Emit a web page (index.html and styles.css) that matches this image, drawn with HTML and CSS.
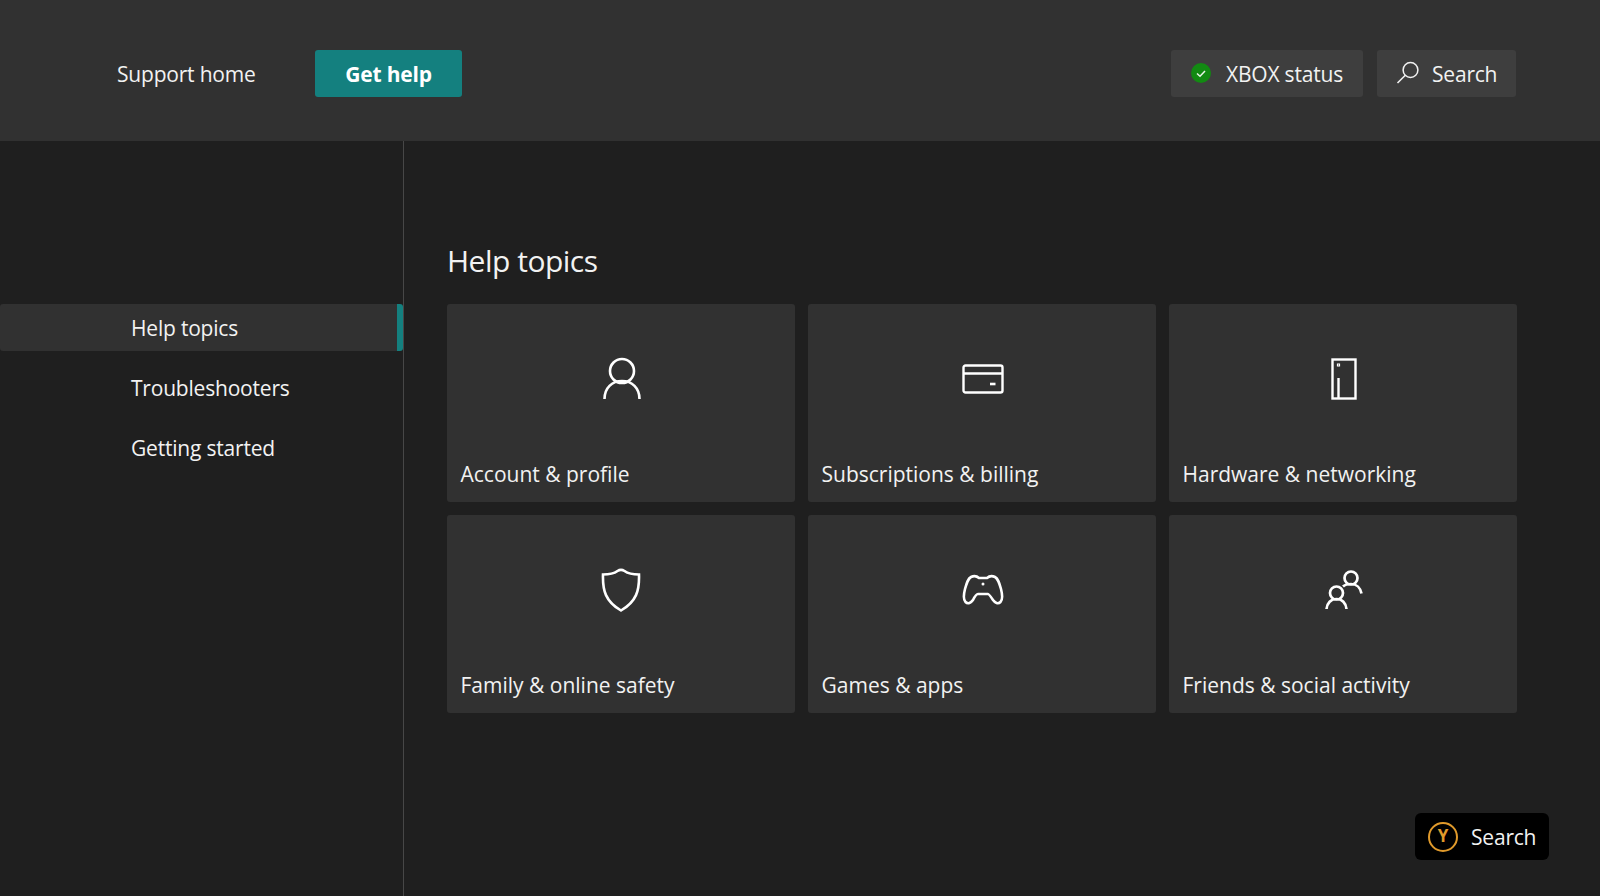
FILE: index.html
```html
<!DOCTYPE html>
<html>
    <head>
        <title>Xbox Support</title>
        <link rel="stylesheet" href="styles.css">
    </head>
    <body>
        <header class="top">
            <a class="home">Support home</a>
            <a class="gethelp">Get help</a>
            <div class="top-right">
                <a class="topbtn status">
                    <svg class="dot" width="22" height="22" viewBox="0 0 22 22"><circle cx="11" cy="11" r="10" fill="#128a12"/><path d="M7 11.500l3 2.800 5-5.400" fill="none" stroke="#e8f5e8" stroke-width="1.500"/></svg>
                    <span class="lbl">XBOX status</span>
                </a>
                <a class="topbtn find">
                    <svg width="24" height="24" viewBox="0 0 24 24"><circle cx="14.500" cy="9" r="7.400" fill="none" stroke="#f2f2f2" stroke-width="1.500"/><path d="M9.300 14.300L1.500 22" fill="none" stroke="#f2f2f2" stroke-width="1.600"/></svg>
                    <span class="lbl">Search</span>
                </a>
            </div>
        </header>
        <div class="wrap">
            <nav class="side">
                <a class="navitem on">Help topics</a>
                <a class="navitem">Troubleshooters</a>
                <a class="navitem">Getting started</a>
            </nav>
            <main class="main">
                <h1>Help topics</h1>
                <div class="cards">
                    <div class="card">
                        <div class="icon"><svg width="40" height="44" viewBox="0 0 40 44"><g fill="none" stroke="#fff" stroke-width="2.600"><circle cx="20" cy="14" r="12"/><path d="M2.500 42C2.500 31 10 24 20 24s17.500 7 17.500 18"/></g></svg></div>
                        <span>Account &amp; profile</span>
                    </div>
                    <div class="card">
                        <div class="icon"><svg width="42" height="30" viewBox="0 0 42 30"><g fill="none" stroke="#fff" stroke-width="2.400"><rect x="1.500" y="1.500" width="39" height="27" rx="2"/><path d="M1.500 9.500h39"/><path d="M28 20h5.500" stroke-width="2.600"/></g></svg></div>
                        <span>Subscriptions &amp; billing</span>
                    </div>
                    <div class="card">
                        <div class="icon"><svg width="26" height="42" viewBox="0 0 26 42"><g fill="none" stroke="#fff" stroke-width="2.400"><rect x="1.500" y="1.500" width="23" height="39"/><path d="M7.500 20v20"/><path d="M6.500 6h2v2h-2z" stroke-width="1.200"/></g></svg></div>
                        <span>Hardware &amp; networking</span>
                    </div>
                    <div class="card">
                        <div class="icon shield"><svg width="40" height="44" viewBox="0 0 40 44"><path d="M2 6.500C8 6.500 13 5.500 16.500 3c2.300-1.500 4.700-1.500 7 0C27 5.500 32 6.500 38 6.500c.5 16-2.500 27-18 36C4.500 33.500 1.500 22.500 2 6.500z" fill="none" stroke="#fff" stroke-width="2.600"/></svg></div>
                        <span>Family &amp; online safety</span>
                    </div>
                    <div class="card">
                        <div class="icon"><svg width="42" height="32" viewBox="0 0 42 32"><path d="M9 3c3-1.500 6-.8 8 1h8c2-1.800 5-2.500 8-1 3 1.500 4 5 6 12 1.500 6 1.500 11-.5 13-2.500 2.500-5.500.8-7.500-2-2-3-4-6-5-6H16c-2 0-3.500 3-5 6-2 2.800-5 4.500-7.500 2C1.500 26 1.500 21 3 15 5 8 6 4.500 9 3z" fill="none" stroke="#fff" stroke-width="2.600"/><circle cx="21" cy="10" r="1.500" fill="#fff"/></svg></div>
                        <span>Games &amp; apps</span>
                    </div>
                    <div class="card">
                        <div class="icon"><svg width="38" height="40" viewBox="0 0 38 40"><g fill="none" stroke="#fff" stroke-width="2.700"><circle cx="26" cy="8" r="6.500"/><path d="M18 16.500c2-2 5-2.500 8-2.500 5.500 0 9.500 4 10.500 9.500"/><circle cx="11.500" cy="23" r="6.500"/><path d="M1.500 39c.5-6 4.500-10 10-10s9.500 4 10 10"/></g></svg></div>
                        <span>Friends &amp; social activity</span>
                    </div>
                </div>
            </main>
        </div>
        <div class="hint">
            <span class="ybtn">Y</span>
            Search
        </div>
    </body>
</html>
```

FILE: styles.css
```css
html, body {
    margin: 0;
    height: 100%;
}
body {
    background-color: #1f1f1f;
    color: #f2f2f2;
    font-family: "Open Sans", "Noto Sans", sans-serif;
    font-size: 21px;
    overflow: hidden;
}
.top {
    height: 141px;
    background-color: #313131;
    display: flex;
    align-items: center;
    padding: 5px 84px 0 116px;
    box-sizing: border-box;
}
.top, .top a {
    letter-spacing: -0.2px;
}
.home {
    width: 199px;
    padding-top: 1px;
    padding-left: 1px;
    margin-right: -1px;
    letter-spacing: -0.3px;
}
.gethelp {
    width: 147px;
    height: 47px;
    line-height: 48px;
    text-align: center;
    background-color: #14807f;
    border-radius: 3px;
    color: #fff;
    font-weight: 700;
}
.top-right {
    margin-left: auto;
    display: flex;
    gap: 14px;
}
.topbtn {
    height: 47px;
    display: flex;
    align-items: center;
    background-color: #3e3e3e;
    border-radius: 3px;
    box-sizing: border-box;
}
.lbl {
    padding-top: 1px;
}
.status {
    width: 192px;
    padding-left: 19px;
    gap: 14px;
}
.find {
    width: 139px;
    padding-left: 19px;
    gap: 12px;
    letter-spacing: -0.4px;
}
.wrap {
    display: flex;
    height: 755px;
}
.side {
    width: 404px;
    box-sizing: border-box;
    border-right: 1px solid #474747;
    padding-top: 163px;
    display: flex;
    flex-direction: column;
    gap: 13px;
}
.navitem {
    height: 47px;
    line-height: 49px;
    padding-left: 131px;
    letter-spacing: -0.2px;
}
.navitem.on {
    background-color: #313131;
    border-right: 6px solid #14807f;
    border-radius: 3px;
}
.main {
    padding: 97px 0 0 43px;
}
h1 {
    margin: 0 0 20px 0;
    height: 46px;
    line-height: 46px;
    font-size: 30px;
    font-weight: 400;
    letter-spacing: -0.5px;
}
.cards {
    display: grid;
    grid-template-columns: repeat(3, 348px);
    grid-auto-rows: 197.500px;
    gap: 13.500px 13px;
}
.card {
    background-color: #313131;
    border-radius: 3px;
    box-sizing: border-box;
    padding-top: 53px;
    position: relative;
}
.icon {
    height: 44px;
    display: flex;
    justify-content: center;
    align-items: center;
    padding-left: 1px;
}
.icon.shield {
    padding-left: 0;
}
.card span {
    position: absolute;
    left: 13.500px;
    bottom: 14px;
}
.hint {
    position: absolute;
    left: 1415px;
    top: 813px;
    width: 134px;
    height: 47px;
    background-color: #000;
    border-radius: 6px;
    display: flex;
    align-items: center;
    padding-left: 13px;
    gap: 13px;
    box-sizing: border-box;
    letter-spacing: -0.2px;
}
.ybtn {
    width: 30px;
    height: 30px;
    box-sizing: border-box;
    border: 2.500px solid #e09a2b;
    border-radius: 50%;
    color: #e09a2b;
    font-size: 17px;
    font-weight: 700;
    text-align: center;
    line-height: 24px;
}
```
